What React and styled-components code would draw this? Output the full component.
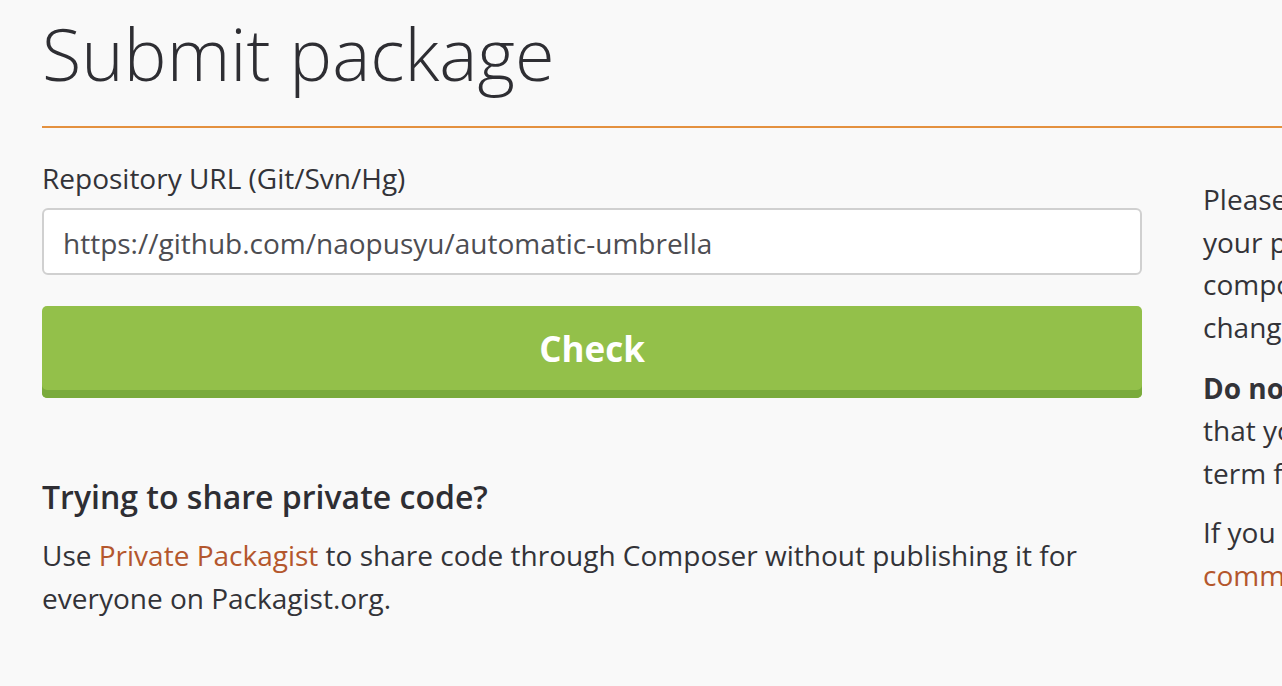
import React from "react";
import styled, { createGlobalStyle } from "styled-components";

const Global = createGlobalStyle`
  html, body {
    margin: 0;
    padding: 0;
    background: #f9f9f9;
    overflow: hidden;
  }
  body {
    font-family: "Open Sans", "Noto Sans", sans-serif;
    color: #333338;
  }
`;

const Page = styled.div`
  width: 2200px;
  padding: 4px 0 0 42px;
`;

const Header = styled.header`
  border-bottom: 2px solid #e4913f;
  padding-bottom: 24px;
`;

const Title = styled.h1`
  margin: 0;
  font-size: 72px;
  font-weight: 300;
  line-height: 98px;
  color: #2e2e33;
`;

const Columns = styled.div`
  display: flex;
  gap: 61px;
  align-items: flex-start;
`;

const Main = styled.main`
  width: 1100px;
  flex-shrink: 0;
  padding-top: 31px;
`;

const Label = styled.label`
  display: block;
  font-size: 28px;
  line-height: 38px;
  color: #333338;
  margin-bottom: 11px;
`;

const Input = styled.input`
  display: block;
  box-sizing: border-box;
  width: 100%;
  height: 67px;
  padding: 2px 19px 0;
  border: 2px solid #d0d0d0;
  border-radius: 6px;
  background: #fff;
  font-family: inherit;
  font-size: 28px;
  color: #4d4d52;
  outline: none;
`;

const CheckButton = styled.button`
  display: block;
  box-sizing: border-box;
  width: 100%;
  height: 92px;
  margin-top: 31px;
  border: 0;
  border-radius: 5px;
  background: #93c04a;
  box-shadow: inset 0 -8px 0 #7aab3c;
  color: #fff;
  font-family: inherit;
  font-size: 35px;
  font-weight: 700;
  padding: 0 0 8px;
  cursor: pointer;
`;

const SubHeading = styled.h2`
  margin: 77px 0 0;
  font-size: 32px;
  font-weight: 600;
  line-height: 44px;
  color: #2e2e33;
`;

const Text = styled.p`
  margin: ${(p) => p.$top || 0}px 0 0;
  font-size: 28px;
  line-height: 42.5px;
  color: #333338;
  white-space: ${(p) => (p.$nowrap ? "nowrap" : "normal")};
`;

const Link = styled.a`
  color: #b4572d;
  text-decoration: none;
`;

const Aside = styled.aside`
  flex-shrink: 0;
  padding-top: 50px;
`;

export default function App() {
  return (
    <>
      <Global />
      <Page>
        <Header>
          <Title>Submit package</Title>
        </Header>
        <Columns>
          <Main>
            <Label htmlFor="repo">Repository URL (Git/Svn/Hg)</Label>
            <Input
              id="repo"
              defaultValue="https://github.com/naopusyu/automatic-umbrella"
            />
            <CheckButton>Check</CheckButton>
            <SubHeading>Trying to share private code?</SubHeading>
            <Text $top={15}>
              Use <Link href="#">Private Packagist</Link> to share code through
              Composer without publishing it for everyone on Packagist.org.
            </Text>
          </Main>
          <Aside>
            <Text $nowrap>
              Please make sure you have read the package naming conventions before submitting
              <br />
              your package. The authoritative name of your package will be taken from the
              <br />
              composer.json file inside the default branch or trunk of your repository, and it can not be
              <br />
              changed after that.
            </Text>
            <Text $nowrap $top={18.5}>
              <b>Do not submit forks of existing packages.</b> If you need to test changes to a package
              <br />
              that you forked to patch, use VCS Repositories instead. If however it is a real long-
              <br />
              term fork you intend on maintaining feel free to submit it.
            </Text>
            <Text $nowrap $top={17}>
              If you need help or if you have any questions please get in touch with the Composer
              <br />
              <Link href="#">community</Link>.
            </Text>
          </Aside>
        </Columns>
      </Page>
    </>
  );
}
